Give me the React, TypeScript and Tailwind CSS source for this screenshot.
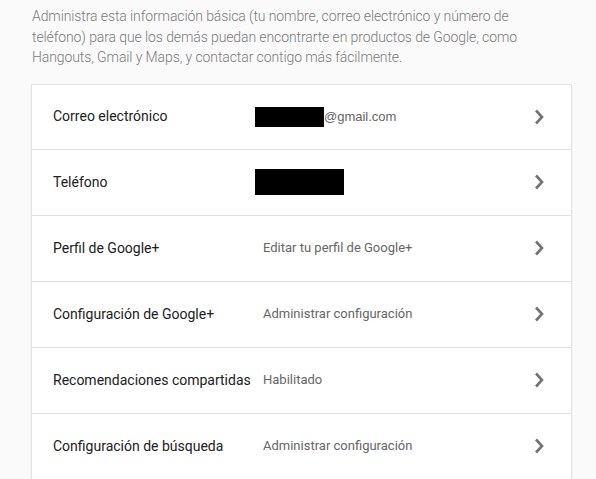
import React from "react";

const rows: { label: string; value?: string; box?: "email" | "phone" }[] = [
  { label: "Correo electrónico", box: "email" },
  { label: "Teléfono", box: "phone" },
  { label: "Perfil de Google+", value: "Editar tu perfil de Google+" },
  { label: "Configuración de Google+", value: "Administrar configuración" },
  { label: "Recomendaciones compartidas", value: "Habilitado" },
  { label: "Configuración de búsqueda", value: "Administrar configuración" },
];

function Chevron() {
  return (
    <svg width="12" height="18" viewBox="0 0 12 18" className="shrink-0">
      <path d="M3 2.5 L9 9 L3 15.5" fill="none" stroke="#737373" strokeWidth="2.6" />
    </svg>
  );
}

export default function App() {
  return (
    <div className="w-[596px] h-[479px] overflow-hidden bg-[#fafafa]" style={{ fontFamily: "Roboto, 'Liberation Sans', sans-serif" }}>
      <p className="pl-[32px] pr-[40px] pt-[6px] text-[14px] tracking-[-0.1px] leading-[20.5px] font-light text-[#7a7a7a]">
        Administra esta información básica (tu nombre, correo electrónico y número de teléfono) para que los demás puedan encontrarte en productos de Google, como Hangouts, Gmail y Maps, y contactar contigo más fácilmente.
      </p>
      <div className="ml-[31px] mt-[16px] w-[541px] bg-white border border-[#e4e4e4] shadow-[0_1px_2px_rgba(0,0,0,0.08)]">
        {rows.map((r, i) => (
          <div
            key={i}
            className={`flex items-center pl-[21px] pr-[26px] ${i > 0 ? "h-[66px] border-t border-[#e0e0e0]" : "h-[64px]"}`}
          >
            <div className="w-[210px] shrink-0 text-[14px] text-[#212121]">{r.label}</div>
            <div className="flex-1 flex items-center text-[13px] text-[#666666]">
              {r.box === "email" && (
                <>
                  <span className="-ml-[8px] inline-block w-[69px] h-[20px] bg-black" />
                  <span className="text-[13px] text-[#666666]" style={{ fontFamily: "'Liberation Sans', Arial, sans-serif" }}>@gmail.com</span>
                </>
              )}
              {r.box === "phone" && <span className="-ml-[8px] inline-block w-[89px] h-[26px] bg-black" />}
              {r.value && <span>{r.value}</span>}
            </div>
            <Chevron />
          </div>
        ))}
      </div>
    </div>
  );
}
